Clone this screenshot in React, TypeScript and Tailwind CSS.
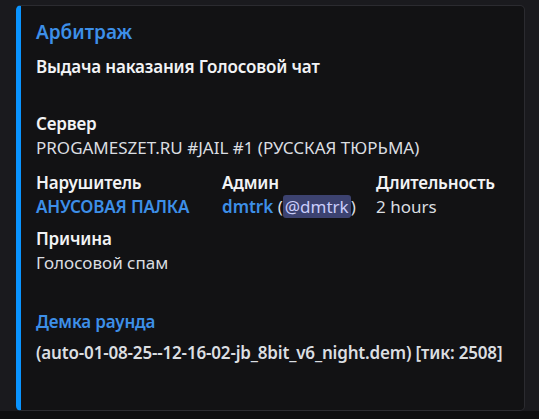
import React from "react";

const font = { fontFamily: '"Noto Sans", "Open Sans", sans-serif' };

type Field = { name: string; value: React.ReactNode };

const FieldBlock = ({ name, value }: Field) => {
  return (
    <div className="flex flex-col">
      <div className="text-[17px] leading-[22px] font-semibold tracking-[-0.01em] text-[#f2f3f5] mb-[2px]">{name}</div>
      <div className="text-[17px] leading-[22px] text-[#dbdee1]">{value}</div>
    </div>
  );
};

const App = () => {
  return (
    <div className="w-[539px] h-[419px] bg-[#1a1a1e] flex flex-col overflow-hidden" style={font}>
      <div className="h-[5px]" />
      <div className="ml-[16px] w-[509px] h-[406px] bg-[#121214] border border-[#2b2b30] border-l-[5px] border-l-[#0a94ff] rounded-[5px] pl-[15px] pr-[14px] pt-[13px] flex flex-col">
        {/* title */}
        <div className="text-[19px] leading-[26px] font-semibold text-[#3d8fe8]">Арбитраж</div>
        <div className="mt-[11px] text-[17px] leading-[22px] font-semibold tracking-[-0.01em] text-[#f2f3f5]">
          Выдача наказания Голосовой чат
        </div>
        <div className="h-[22px]" />
        <div className="mt-[13px] flex flex-col">
          <FieldBlock name="Сервер" value="PROGAMESZET.RU #JAIL #1 (РУССКАЯ ТЮРЬМА)" />
          <div className="mt-[13px] grid grid-cols-[186px_154px_1fr]">
            <FieldBlock
              name="Нарушитель"
              value={<span className="font-semibold tracking-[-0.01em] text-[#3d8fe8]">АНУСОВАЯ ПАЛКА</span>}
            />
            <FieldBlock
              name="Админ"
              value={
                <span>
                  <span className="font-semibold text-[#3d8fe8]">dmtrk</span>{" "}
                  (
                  <span className="bg-[#3c4270] text-[#c9cdfb] rounded-[3px] px-[2px]">@dmtrk</span>
                  )
                </span>
              }
            />
            <FieldBlock name="Длительность" value="2 hours" />
          </div>
          <div className="mt-[10px]">
            <FieldBlock name="Причина" value="Голосовой спам" />
          </div>
        </div>
        <div className="mt-[37px] text-[17px] leading-[22px] font-semibold tracking-[-0.01em] text-[#3d8fe8]">Демка раунда</div>
        <div className="mt-[9px] whitespace-nowrap text-[17px] leading-[22px] font-semibold tracking-[-0.01em] text-[#dbdee1]">
          (auto-01-08-25--12-16-02-jb_8bit_v6_night.dem) [тик: 2508]
        </div>
      </div>
      <div className="flex-1 bg-[#0e0e10]" />
    </div>
  );
};

export default App;
